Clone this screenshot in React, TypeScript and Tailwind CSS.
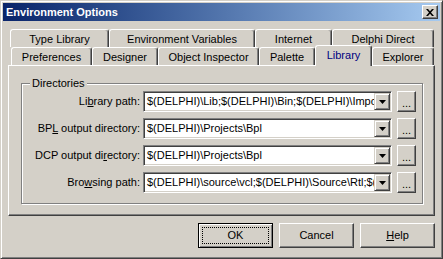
import React from 'react';

// Win2000 style bevels
const raised =
  'border border-t-white border-l-white border-r-[#404040] border-b-[#404040] shadow-[inset_-1px_-1px_0_#808080]';
const sunken =
  'border border-t-[#808080] border-l-[#808080] border-r-white border-b-white shadow-[inset_1px_1px_0_#404040,inset_-1px_-1px_0_#d4d0c8]';

type TabDef = { label: string; w: string; selected?: boolean };

const backRow: TabDef[] = [
  { label: 'Type Library', w: 'w-[99px]' },
  { label: 'Environment Variables', w: 'w-[146px]' },
  { label: 'Internet', w: 'w-[77px]' },
  { label: 'Delphi Direct', w: 'w-[102px]' },
];

const frontRow: TabDef[] = [
  { label: 'Preferences', w: 'w-[81px]' },
  { label: 'Designer', w: 'w-[66px]' },
  { label: 'Object Inspector', w: 'w-[101px]' },
  { label: 'Palette', w: 'w-[56px]' },
  { label: 'Library', w: 'w-[57px]', selected: true },
  { label: 'Explorer', w: 'w-[62px]' },
];

const Tab: React.FC<{ tab: TabDef }> = ({ tab }) => {
  const base = `${tab.w} flex justify-center border-t border-l border-r border-t-white border-l-white border-r-[#404040] rounded-t-[3px] shadow-[inset_-1px_0_0_#808080] bg-[#d4d0c8] whitespace-nowrap`;
  if (tab.selected) {
    return (
      <div className={`${base} relative z-10 -mt-[2px] h-[21px] items-center pb-[1px] text-[#000080]`}>
        {tab.label}
      </div>
    );
  }
  return <div className={`${base} h-[18px] items-center pt-[2px]`}>{tab.label}</div>;
};

const Arrow = () => (
  <svg width="7" height="4" viewBox="0 0 7 4">
    <path d="M0 0h7L3.5 4z" fill="#000" />
  </svg>
);

const Row: React.FC<{ label: React.ReactNode; value: string }> = ({ label, value }) => (
  <div className="flex items-center h-[21px]">
    <div className="w-[118px] text-right whitespace-nowrap">{label}</div>
    <div className={`ml-[3px] w-[249px] h-[21px] bg-white flex p-[1px] ${sunken}`}>
      <div className="flex-1 overflow-hidden whitespace-nowrap pl-[2px] leading-[17px]">{value}</div>
      <div className="w-[16px] h-[17px] flex items-center justify-center bg-[#d4d0c8] border border-t-[#d4d0c8] border-l-[#d4d0c8] border-r-[#404040] border-b-[#404040] shadow-[inset_1px_1px_0_#fff,inset_-1px_-1px_0_#808080]">
        <Arrow />
      </div>
    </div>
    <div className={`ml-[5px] w-[19px] h-[21px] flex items-end justify-center pb-[2px] leading-none ${raised}`}>
      ...
    </div>
  </div>
);

const Btn: React.FC<{ children: React.ReactNode; def?: boolean }> = ({ children, def }) =>
  def ? (
    <div className="relative w-[75px] h-[25px] flex items-center justify-center border border-black shadow-[inset_1px_1px_0_#fff,inset_-1px_-1px_0_#808080]">
      {children}
      <div className="absolute inset-[3px] border border-dotted border-black" />
    </div>
  ) : (
    <div className={`w-[75px] h-[25px] flex items-center justify-center ${raised}`}>{children}</div>
  );

export default function App() {
  return (
    <div className="w-[443px] h-[259px] bg-[#d4d0c8] font-['Liberation_Sans',Arial,sans-serif] text-[11px] text-black border border-t-[#d4d0c8] border-l-[#d4d0c8] border-r-[#404040] border-b-[#404040] shadow-[inset_1px_1px_0_#fff,inset_-1px_-1px_0_#808080] p-[2px] overflow-hidden select-none">
      {/* Title bar */}
      <div className="h-[18px] flex items-center bg-linear-to-r from-[#0a246a] to-[#a6caf0] pl-[3px] pr-[2px]">
        <span className="font-bold text-white">Environment Options</span>
        <div className={`ml-auto w-[16px] h-[14px] flex items-center justify-center bg-[#d4d0c8] ${raised}`}>
          <svg width="8" height="7" viewBox="0 0 8 7">
            <path d="M0 0h2l2 2.2L6 0h2L5 3.5 8 7H6L4 4.8 2 7H0l3-3.5z" fill="#000" />
          </svg>
        </div>
      </div>

      {/* Tabs */}
      <div className="ml-[5px] mt-[8px] w-[427px]">
        <div className="flex h-[18px] pl-[2px]">
          {backRow.map((t) => (
            <Tab key={t.label} tab={t} />
          ))}
        </div>
        <div className="flex h-[18px] pl-[3px]">
          {frontRow.map((t) => (
            <Tab key={t.label} tab={t} />
          ))}
        </div>

        <div className={`h-[151px] pl-[12px] pt-[17px] ${raised}`}>
          <div className="relative w-[402px] h-[121px] border border-[#808080] shadow-[inset_1px_1px_0_#fff,1px_1px_0_#fff] pt-[7px] flex flex-col gap-[6px]">
            <span className="absolute left-[8px] -top-[8px] px-[2px] bg-[#d4d0c8] leading-[14px]">Directories</span>
            <Row
              label={<>Li<span className="underline">b</span>rary path:</>}
              value={'$(DELPHI)\\Lib;$(DELPHI)\\Bin;$(DELPHI)\\Imports;$(DELPHI)\\Projects\\Bpl'}
            />
            <Row
              label={<>BP<span className="underline">L</span> output directory:</>}
              value={'$(DELPHI)\\Projects\\Bpl'}
            />
            <Row
              label={<>DCP output di<span className="underline">r</span>ectory:</>}
              value={'$(DELPHI)\\Projects\\Bpl'}
            />
            <Row
              label={<>Bro<span className="underline">w</span>sing path:</>}
              value={'$(DELPHI)\\source\\vcl;$(DELPHI)\\Source\\Rtl;$(DELPHI)\\Source\\Internet'}
            />
          </div>
        </div>

        {/* Buttons */}
        <div className="mt-[7px] flex justify-end gap-[6px]">
          <Btn def>OK</Btn>
          <Btn>Cancel</Btn>
          <Btn>
            <span className="underline">H</span>elp
          </Btn>
        </div>
      </div>
    </div>
  );
}
